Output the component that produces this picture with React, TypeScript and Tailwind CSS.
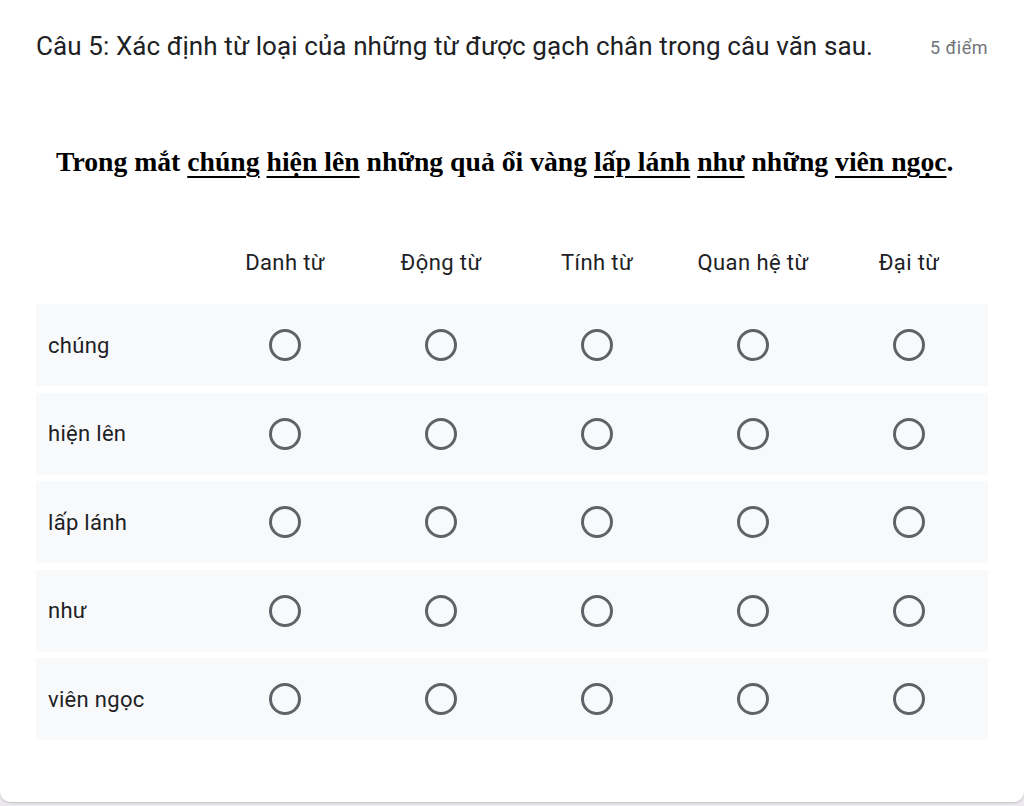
import React from "react";

const cols = ["Danh từ", "Động từ", "Tính từ", "Quan hệ từ", "Đại từ"];
const rows = ["chúng", "hiện lên", "lấp lánh", "như", "viên ngọc"];

function Radio() {
  return <div className="w-[32px] h-[32px] rounded-full border-[3px] border-[#5f6368]" />;
}

function U({ children }: { children: React.ReactNode }) {
  return <span className="underline decoration-[2px] underline-offset-[5px]">{children}</span>;
}

export default function App() {
  return (
    <div className="w-[1024px] h-[806px] bg-[#ebe9ef]" style={{ fontFamily: "Roboto, 'Noto Sans', sans-serif" }}>
      <div className="h-[802px] bg-white rounded-b-[10px] shadow-[0_1px_2px_rgba(60,64,67,0.25)] px-[36px] pt-[29px]">
        <div className="flex justify-between items-start">
          <div className="text-[26px] tracking-[0.1px] leading-[34px] text-[#202124]">
            Câu 5: Xác định từ loại của những từ được gạch chân trong câu văn sau.
          </div>
          <div className="text-[18px] tracking-[0.5px] leading-[34px] text-[#70757a] pt-[2px]">5 điểm</div>
        </div>
        <div
          className="mt-[80px] pl-[20px] text-[27.7px] leading-[34px] font-bold text-black whitespace-nowrap"
          style={{ fontFamily: "'Liberation Serif', 'Times New Roman', serif" }}
        >
          Trong mắt <U>chúng</U> <U>hiện lên</U> những quả ổi vàng <U>lấp lánh</U> <U>như</U> những <U>viên ngọc</U>.
        </div>
        <div className="mt-[66px] grid grid-cols-[171px_repeat(5,156px)] h-[34px] items-center text-[22px] tracking-[0.4px] text-[#202124]">
          <div />
          {cols.map((c) => (
            <div key={c} className="text-center">{c}</div>
          ))}
        </div>
        <div className="mt-[25px] flex flex-col gap-[6.5px]">
          {rows.map((r) => (
            <div key={r} className="grid grid-cols-[171px_repeat(5,156px)] h-[82px] items-center bg-[#f8f9fa] rounded-[2px]">
              <div className="pl-[12px] text-[22px] tracking-[0.3px] text-[#202124]">{r}</div>
              {cols.map((c) => (
                <div key={c} className="flex justify-center">
                  <Radio />
                </div>
              ))}
            </div>
          ))}
        </div>
      </div>
    </div>
  );
}
